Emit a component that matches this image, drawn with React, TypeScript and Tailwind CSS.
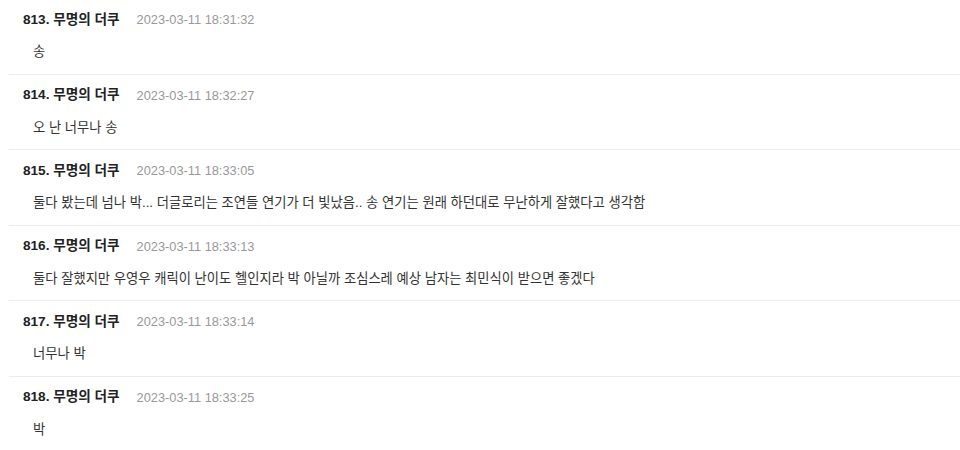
const comments = [
  { no: 813, time: "2023-03-11 18:31:32", text: "송" },
  { no: 814, time: "2023-03-11 18:32:27", text: "오 난 너무나 송" },
  {
    no: 815,
    time: "2023-03-11 18:33:05",
    text: "둘다 봤는데 넘나 박... 더글로리는 조연들 연기가 더 빛났음.. 송 연기는 원래 하던대로 무난하게 잘했다고 생각함",
  },
  {
    no: 816,
    time: "2023-03-11 18:33:13",
    text: "둘다 잘했지만 우영우 캐릭이 난이도 헬인지라 박 아닐까 조심스레 예상 남자는 최민식이 받으면 좋겠다",
  },
  { no: 817, time: "2023-03-11 18:33:14", text: "너무나 박" },
  { no: 818, time: "2023-03-11 18:33:25", text: "박" },
]

export default function App() {
  return (
    <div
      className="w-[960px] h-[450px] overflow-hidden bg-white"
      style={{ fontFamily: '"Liberation Sans", "Noto Sans CJK KR", sans-serif' }}
    >
      <ul className="-mt-[1px] pl-[9px]">
        {comments.map((c) => (
          <li key={c.no} className="border-b border-[#ececec] pt-[11px] pb-[11.5px]">
            <div className="flex items-center h-5 pl-[14px]">
              <span className="text-[13.6px] font-bold text-[#222]">
                {c.no}. 무명의 더쿠
              </span>
              <span className="ml-[17px] text-[12.8px] text-[#999]">{c.time}</span>
            </div>
            <div className="mt-3 h-5 flex items-center pl-[24px] text-[13.3px] text-[#333]">
              {c.text}
            </div>
          </li>
        ))}
      </ul>
    </div>
  )
}
